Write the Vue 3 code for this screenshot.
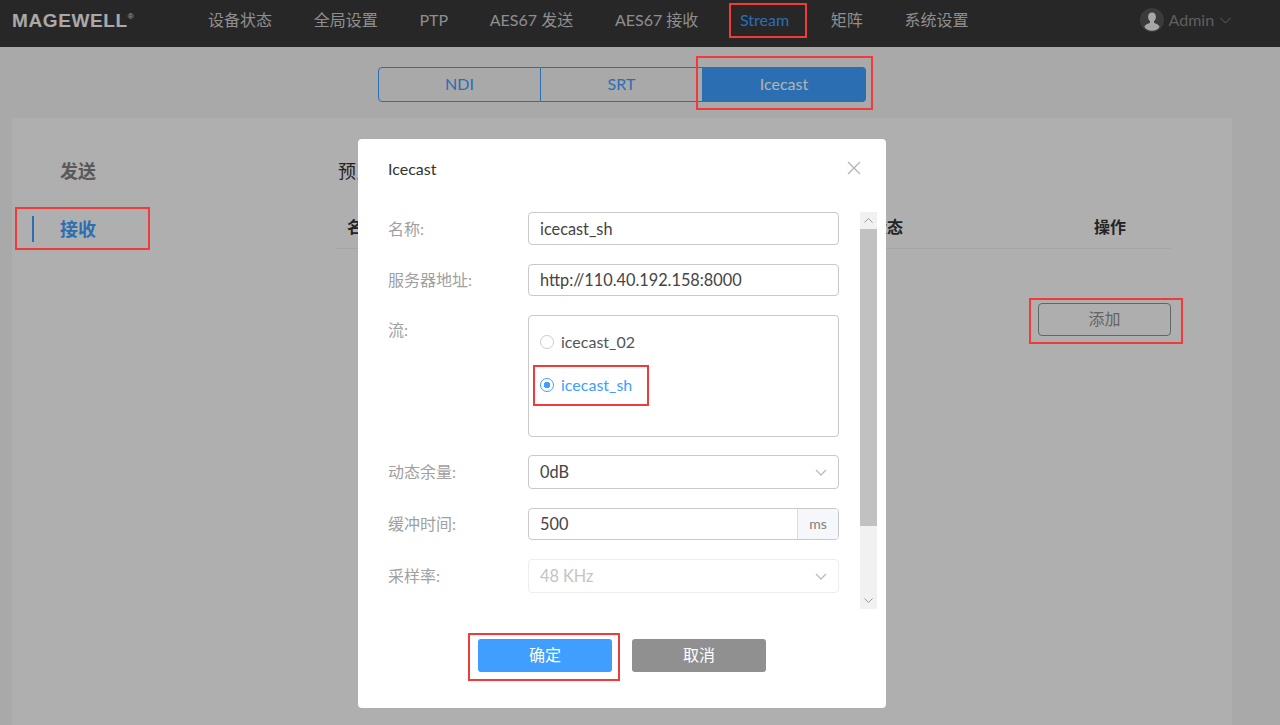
<template>
  <div class="page">
    <header class="topbar">
      <div class="logo">MAGEWELL<sup>®</sup></div>
      <nav class="nav">
        <span v-for="item in navItems" :key="item" class="nav-item" :class="{ active: item === 'Stream' }">{{ item }}</span>
      </nav>
      <div class="user">
        <svg class="avatar" width="24" height="24" viewBox="0 0 24 24">
          <circle cx="12" cy="12" r="12" fill="#555" />
          <path d="M12 4.500c-2.600 0-3.900 2-3.900 4.400 0 1.900.8 3.500 1.900 4.400v1.500c-1.500 1-5 1.500-5.500 4.200 1.500 2.600 4 3.700 7.500 3.700s6-1.100 7.500-3.700c-.5-2.700-4-3.200-5.500-4.200v-1.500c1.100-.9 1.900-2.500 1.900-4.400 0-2.400-1.300-4.400-3.900-4.400z" fill="#f0f0f0" />
        </svg>
        <span class="user-name">Admin</span>
        <svg width="11" height="7" viewBox="0 0 11 7"><path d="M.5 1l5 5 5-5" fill="none" stroke="#888" /></svg>
      </div>
    </header>

    <div class="tabs">
      <button v-for="tab in tabs" :key="tab" class="tab" :class="{ on: tab === 'Icecast' }">{{ tab }}</button>
    </div>

    <section class="panel">
      <aside class="side">
        <div class="side-item">发送</div>
        <div class="side-item current">接收</div>
      </aside>
      <div class="main">
        <h2 class="main-title">预览</h2>
        <div class="table-head">
          <span class="col-name">名称</span>
          <span class="col-status">状态</span>
          <span class="col-action">操作</span>
        </div>
        <div class="table-foot">
          <button class="add-btn">添加</button>
        </div>
      </div>
    </section>

    <div class="overlay">
      <div class="dialog">
        <div class="dialog-head">
          <span class="dialog-title">Icecast</span>
          <svg width="14" height="14" viewBox="0 0 14 14"><path d="M1 1l12 12M13 1L1 13" stroke="#b4b4b4" stroke-width="1.300" fill="none" /></svg>
        </div>
        <div class="dialog-body">
          <div class="form">
            <div class="row r1">
              <label>名称:</label>
              <div class="field">icecast_sh</div>
            </div>
            <div class="row r2">
              <label>服务器地址:</label>
              <div class="field">http://110.40.192.158:8000</div>
            </div>
            <div class="row r3">
              <label class="top">流:</label>
              <div class="stream-box">
                <div v-for="s in streams" :key="s" class="radio" :class="{ checked: s === selected }">
                  <i class="dot"></i>{{ s }}
                </div>
              </div>
            </div>
            <div class="row r4">
              <label>动态余量:</label>
              <div class="field select">0dB
                <svg width="12" height="7" viewBox="0 0 12 7"><path d="M1 1l5 5 5-5" fill="none" stroke="#bbb" stroke-width="1.300" /></svg>
              </div>
            </div>
            <div class="row r5">
              <label>缓冲时间:</label>
              <div class="field group">
                <span class="group-value">500</span>
                <span class="unit">ms</span>
              </div>
            </div>
            <div class="row r6">
              <label>采样率:</label>
              <div class="field select disabled">48 KHz
                <svg width="12" height="7" viewBox="0 0 12 7"><path d="M1 1l5 5 5-5" fill="none" stroke="#bbb" stroke-width="1.300" /></svg>
              </div>
            </div>
          </div>
          <div class="scrollbar">
            <div class="sb-btn">
              <svg width="9" height="5" viewBox="0 0 9 5"><path d="M.5 4.500l4-4 4 4" fill="none" stroke="#999" /></svg>
            </div>
            <div class="sb-thumb"></div>
            <div class="sb-track"></div>
            <div class="sb-btn">
              <svg width="9" height="5" viewBox="0 0 9 5"><path d="M.5.5l4 4 4-4" fill="none" stroke="#999" /></svg>
            </div>
          </div>
        </div>
        <div class="dialog-foot">
          <button class="btn primary">确定</button>
          <button class="btn grey">取消</button>
        </div>
      </div>
    </div>

    <!-- red annotation boxes drawn on top of the screenshot -->
    <div
      v-for="(m, i) in marks"
      :key="i"
      class="mark"
      :style="{ left: m[0] + 'px', top: m[1] + 'px', width: m[2] + 'px', height: m[3] + 'px' }"
    ></div>
  </div>
</template>

<script setup>
const navItems = ['设备状态', '全局设置', 'PTP', 'AES67 发送', 'AES67 接收', 'Stream', '矩阵', '系统设置']
const tabs = ['NDI', 'SRT', 'Icecast']
const streams = ['icecast_02', 'icecast_sh']
const selected = 'icecast_sh'

const marks = [
  [729, 3, 78, 35],
  [696, 56, 177, 54],
  [15, 207, 135, 43],
  [1029, 298, 154, 46],
  [533, 365, 116, 41],
  [468, 633, 152, 48]
]
</script>

<style>
html, body {
  margin: 0;
  height: 100%;
  overflow: hidden;
}
</style>

<style scoped>
.page {
  position: relative;
  height: 725px;
  background: #f3f3f3;
  font-family: Lato, "Noto Sans CJK SC", sans-serif;
  font-size: 16px;
  line-height: 24px;
  color: #333;
  overflow: hidden;
}

.topbar {
  display: flex;
  align-items: center;
  height: 47px;
  background: #383838;
  padding: 0 0 7px 12px;
  box-sizing: border-box;
}

.logo {
  width: 196px;
  margin-top: 1px;
  font-family: "Liberation Sans", sans-serif;
  font-weight: 700;
  font-size: 19px;
  letter-spacing: .6px;
  color: #f2f2f2;
}

.logo sup {
  font-size: 8px;
  font-weight: 400;
  vertical-align: 8px;
  line-height: 0;
  letter-spacing: 0;
}

.nav {
  display: flex;
  gap: 41.700px;
  color: #ccc;
}

.nav-item {
  white-space: nowrap;
}

.nav-item.active {
  color: #409eff;
}

.user {
  display: flex;
  align-items: center;
  margin-left: 171px;
  color: #888;
}

.avatar {
  margin-right: 5px;
}

.user-name {
  margin-right: 6px;
}

.tabs {
  display: flex;
  margin: 20px 0 0 378px;
}

.tab {
  width: 162px;
  height: 35px;
  padding: 0 0 2px;
  background: transparent;
  border: 1px solid #409eff;
  border-left-width: 0;
  color: #409eff;
  font: inherit;
}

.tab:first-child {
  width: 163px;
  border-left-width: 1px;
  border-radius: 4px 0 0 4px;
}

.tab:last-child {
  width: 163px;
  border-radius: 0 4px 4px 0;
}

.tab.on {
  background: #409eff;
  color: #fff;
}

.panel {
  display: flex;
  margin: 16px 48px 0 12px;
  height: 620px;
  background: #fbfbfb;
}

.side {
  width: 324px;
  flex-shrink: 0;
  padding-top: 40px;
}

.side-item {
  height: 26px;
  line-height: 26px;
  margin-bottom: 32px;
  padding-left: 48px;
  font-size: 18px;
  font-weight: 700;
  color: #808080;
}

.side-item.current {
  color: #409eff;
  margin-left: 20px;
  padding-left: 26px;
  border-left: 2px solid #409eff;
}

.main {
  width: 836px;
}

.main-title {
  margin: 40px 0 0 2px;
  font-size: 18px;
  line-height: 26px;
  font-weight: 400;
  color: #333;
}

.table-head {
  display: flex;
  height: 65px;
  padding-top: 31px;
  box-sizing: border-box;
  font-weight: 700;
  border-bottom: 1px solid #eee;
}

.col-name {
  margin-left: 11px;
}

.col-status {
  margin-left: 492px;
}

.col-action {
  margin-left: 191px;
}

.table-foot {
  display: flex;
  justify-content: flex-end;
  padding: 54px 1px 0 0;
}

.add-btn {
  width: 133px;
  height: 33px;
  padding: 0 0 2px;
  background: #f9f9f9;
  border: 1px solid #909090;
  border-radius: 4px;
  color: #909090;
  font: inherit;
}

.overlay {
  position: fixed;
  inset: 0;
  background: rgba(0, 0, 0, .3);
}

.dialog {
  width: 528px;
  height: 569px;
  margin: 139px 0 0 358px;
  background: #fff;
  border-radius: 4px;
}

.dialog-head {
  display: flex;
  justify-content: space-between;
  align-items: flex-start;
  height: 73px;
  box-sizing: border-box;
  padding: 18px 25px 0 30px;
}

.dialog-head svg {
  margin-top: 4px;
}

.dialog-body {
  display: flex;
  height: 397px;
  padding-left: 30px;
}

.form {
  width: 451px;
  margin-right: 21px;
}

.row {
  display: flex;
  color: #a0a0a0;
}

.row label {
  width: 140px;
  flex-shrink: 0;
  align-self: center;
}

.row label.top {
  align-self: flex-start;
  padding-top: 3px;
}

.r1 { height: 33px; margin-bottom: 19px; }
.r2 { height: 32px; margin-bottom: 19px; }
.r3 { height: 122px; margin-bottom: 18px; }
.r4 { height: 34px; margin-bottom: 19px; }
.r5 { height: 32px; margin-bottom: 19px; }
.r6 { height: 34px; }

.field {
  flex: 1;
  display: flex;
  align-items: center;
  padding: 0 11px;
  font-size: 16.300px;
  color: #444;
  background: #fff;
  border: 1px solid #c9c9c9;
  border-radius: 4px;
}

.select {
  justify-content: space-between;
}

.disabled {
  color: #c4c4c4;
  border-color: #eee;
}

.group {
  padding: 0;
  overflow: hidden;
}

.group-value {
  flex: 1;
  padding-left: 11px;
}

.unit {
  display: flex;
  align-items: center;
  justify-content: center;
  width: 40px;
  height: 100%;
  background: #f5f7fa;
  border-left: 1px solid #dcdcdc;
  font-size: 14px;
  color: #808080;
}

.stream-box {
  flex: 1;
  padding: 4px 11px 0;
  border: 1px solid #c9c9c9;
  border-radius: 4px;
}

.radio {
  display: flex;
  align-items: center;
  height: 43px;
  color: #555;
}

.radio .dot {
  width: 12px;
  height: 12px;
  margin-right: 7px;
  border: 1px solid #ccc;
  border-radius: 50%;
  background: #fff;
}

.radio.checked {
  color: #409eff;
}

.radio.checked .dot {
  border-color: #409eff;
  background: radial-gradient(circle, #409eff 0 3px, #fff 3.500px);
}

.scrollbar {
  display: flex;
  flex-direction: column;
  width: 17px;
}

.sb-btn {
  display: flex;
  align-items: center;
  justify-content: center;
  height: 17px;
  background: #f1f1f1;
}

.sb-thumb {
  height: 297px;
  background: #c1c1c1;
}

.sb-track {
  flex: 1;
  background: #f1f1f1;
}

.dialog-foot {
  display: flex;
  gap: 20px;
  padding: 30px 0 0 120px;
}

.btn {
  width: 134px;
  height: 33px;
  padding: 0 0 2px;
  border: 0;
  border-radius: 3px;
  color: #fff;
  font: inherit;
}

.primary {
  background: #409eff;
}

.grey {
  background: #909090;
}

.mark {
  position: absolute;
  box-sizing: border-box;
  border: 2px solid #f23a3a;
}
</style>
